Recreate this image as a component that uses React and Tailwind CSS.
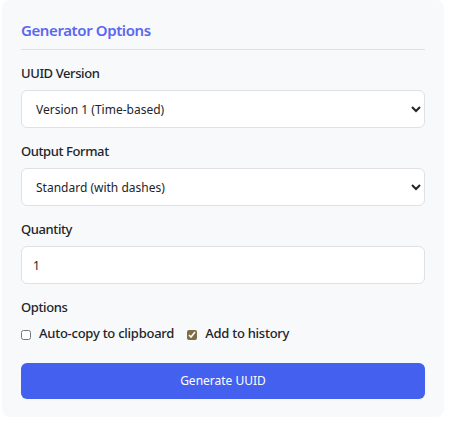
export default function App() {
  return (
    <div className="min-h-screen bg-white pt-0 pl-[2px]" style={{ fontFamily: '"Noto Sans", "Open Sans", sans-serif' }}>
      <div className="w-[442px] rounded-lg bg-[#f8f9fa] px-[19px] pt-[19px] pb-[18px]">
        {/* Header */}
        <h2 className="border-b border-[#dee2e6] pb-[8px] text-[15px] font-semibold leading-[22px] tracking-[-0.4px] text-[#5b67f1]">
          Generator Options
        </h2>

        <div className="mt-[13px] flex flex-col gap-[13px]">
          <div>
            <label className="mb-[7px] block text-[13px] font-medium leading-[20px] tracking-[-0.4px] text-[#212529]">UUID Version</label>
            <select className="h-[38px] w-full rounded-md border border-[#dee2e6] bg-white px-[10px] text-[12px] text-[#212529] outline-none">
              <option>Version 1 (Time-based)</option>
              <option>Version 4 (Random)</option>
            </select>
          </div>

          <div>
            <label className="mb-[7px] block text-[13px] font-medium leading-[20px] tracking-[-0.4px] text-[#212529]">Output Format</label>
            <select className="h-[38px] w-full rounded-md border border-[#dee2e6] bg-white px-[10px] text-[12px] text-[#212529] outline-none">
              <option>Standard (with dashes)</option>
              <option>Compact (no dashes)</option>
            </select>
          </div>

          <div>
            <label className="mb-[7px] block text-[13px] font-medium leading-[20px] tracking-[-0.4px] text-[#212529]">Quantity</label>
            <input
              type="number"
              defaultValue={1}
              className="h-[38px] w-full rounded-md border border-[#dee2e6] bg-white px-[11px] text-[12px] text-[#212529] outline-none"
            />
          </div>

          <div>
            <label className="block text-[13px] font-medium leading-[20px] tracking-[-0.4px] text-[#212529]">Options</label>
            <div className="mt-[6px] flex items-center gap-[13px]">
              <label className="flex items-center gap-[8px] text-[13px] font-medium leading-[20px] tracking-[-0.25px] text-[#212529]">
                <input type="checkbox" className="mt-[3px] h-[10px] w-[10px] accent-[#7f6e44]" />
                Auto-copy to clipboard
              </label>
              <label className="flex items-center gap-[8px] text-[13px] font-medium leading-[20px] tracking-[-0.25px] text-[#212529]">
                <input type="checkbox" defaultChecked className="mt-[3px] h-[10px] w-[10px] accent-[#7f6e44]" />
                Add to history
              </label>
            </div>
          </div>
        </div>

        <button className="mt-[20px] h-[36px] w-full rounded-md bg-[#4361ee] text-[12px] text-white">
          Generate UUID
        </button>
      </div>
    </div>
  );
}
